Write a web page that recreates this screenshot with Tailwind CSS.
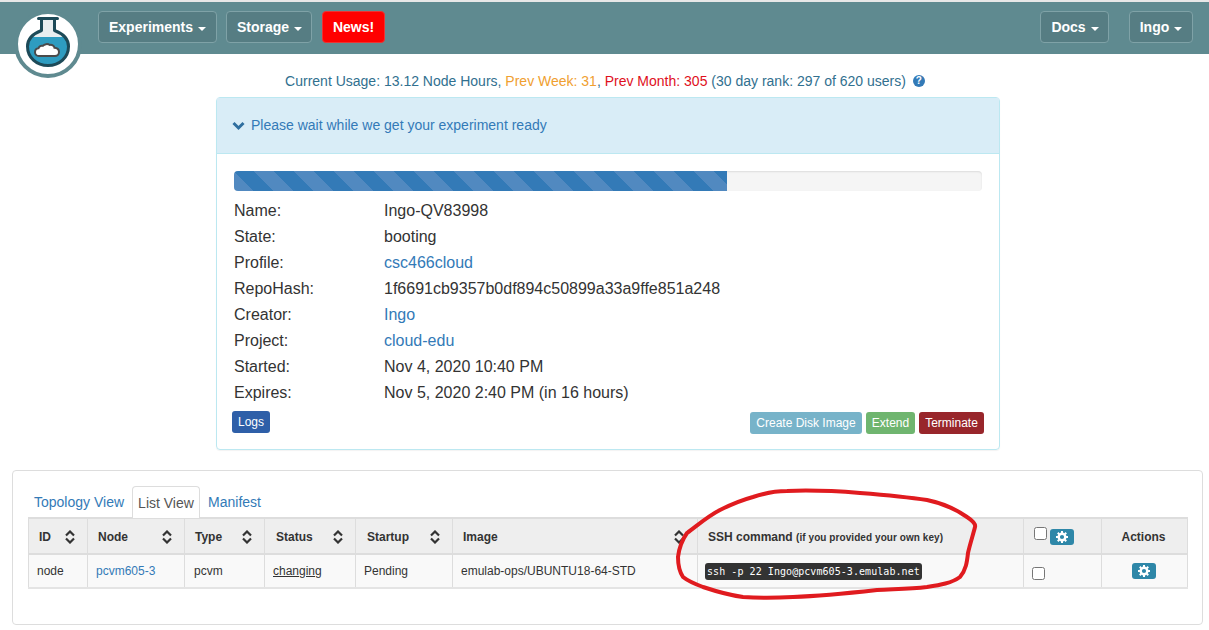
<!DOCTYPE html>
<html lang="en">
<head>
    <meta charset="UTF-8">
    <meta name="viewport" content="width=device-width, initial-scale=1.0">
    <title>Experiment Status</title>
    <script src="https://cdn.jsdelivr.net/npm/@tailwindcss/browser@4"></script>
</head>
<body class="relative h-[630px] overflow-hidden bg-white font-['Liberation_Sans',Arial,sans-serif] text-[14px] text-[#333]">
    <!-- top nav -->
    <nav class="flex h-[54px] items-start justify-between border-t-2 border-[#e7e7e7] bg-[#5f8a90] pl-[98px] pr-[16px] pt-[9px]">
        <div class="flex gap-[9px]">
            <a class="flex h-[32px] w-[119px] items-center justify-center gap-[5px] rounded border border-[#7fa2a7] bg-[#567d83] pt-[1px] font-bold text-white">Experiments <span class="mt-[2px] border-x-4 border-t-4 border-x-transparent border-t-white"></span></a>
            <a class="flex h-[32px] w-[86px] items-center justify-center gap-[5px] rounded border border-[#7fa2a7] bg-[#567d83] pl-[1px] pt-[1px] font-bold text-white">Storage <span class="mt-[2px] border-x-4 border-t-4 border-x-transparent border-t-white"></span></a>
            <a class="ml-[1px] flex h-[32px] w-[63px] items-center justify-center rounded border border-[#ee3333] bg-[#ff0000] pt-[1px] font-bold text-white">News!</a>
        </div>
        <div class="flex gap-[20px]">
            <a class="flex h-[32px] w-[69px] items-center justify-center gap-[5px] rounded border border-[#7fa2a7] bg-[#567d83] pl-[1px] pt-[1px] font-bold text-white">Docs <span class="mt-[2px] border-x-4 border-t-4 border-x-transparent border-t-white"></span></a>
            <a class="flex h-[32px] w-[64px] items-center justify-center gap-[5px] rounded border border-[#7fa2a7] bg-[#567d83] pt-[1px] font-bold text-white">Ingo <span class="mt-[2px] border-x-4 border-t-4 border-x-transparent border-t-white"></span></a>
        </div>
    </nav>

    <!-- logo sits over the nav -->
    <div class="absolute left-[14px] top-[10px] flex h-[68px] w-[68px] items-center justify-center rounded-full border-4 border-[#5f8a90] bg-white">
        <svg class="mb-[4px]" width="44" height="50" viewBox="0 0 44 50">
            <path d="M13 1.500h18M15.500 1.500v12C6 17 1.500 23 1.500 29.500 1.500 40.500 10.500 48.500 22 48.500S42.500 40.500 42.500 29.500C42.500 23 38 17 28.500 13.500v-12z" fill="#e8eef0"/>
            <path d="M4.500 20h35c2 2.800 3 6 3 9.500 0 11-9 19-20.500 19S1.500 40.500 1.500 29.500c0-3.500 1-6.700 3-9.500z" fill="#2e9cc0"/>
            <path d="M12.500 1.500h19M15.500 1.500v12C6 17 1.500 23 1.500 29.500 1.500 40.500 10.500 48.500 22 48.500S42.500 40.500 42.500 29.500C42.500 23 38 17 28.500 13.500v-12" fill="none" stroke="#1d4a58" stroke-width="3" stroke-linejoin="round" stroke-linecap="round"/>
            <path d="M13 39c-2.500 0-4-1.800-4-3.800 0-2.200 1.500-3.700 3.500-3.900.5-2 2.500-3 4.300-2.500 1.500-1.800 5-2.300 7-.8 2-.5 4.300.5 4.700 2.800 2.500.2 4.500 1.800 4.500 4.200S31 39 29 39z" fill="#fff" stroke="#4a4a4a" stroke-width="2"/>
        </svg>
    </div>

    <!-- usage line -->
    <p class="mt-[19px] flex h-[16px] items-center justify-center gap-[7px] pl-[1px] leading-[16px] text-[#31708f]">
        <span>Current Usage: 13.12 Node Hours, <span class="text-[#f0a030]">Prev Week: 31</span>, <span class="text-[#e0101c]">Prev Month: 305</span> (30 day rank: 297 of 620 users)</span>
        <span class="flex h-[12px] w-[12px] items-center justify-center rounded-full bg-[#337ab7] text-[10px] font-bold leading-none text-white">?</span>
    </p>

    <!-- experiment status panel -->
    <section class="ml-[216px] mt-[8px] h-[353px] w-[784px] rounded border border-[#bce8f1] shadow-[0_1px_1px_rgba(0,0,0,0.05)]">
        <div class="flex h-[56px] items-center gap-[6px] border-b border-[#bce8f1] bg-[#d9edf7] pl-[15px] text-[#337ab7]">
            <svg width="13" height="10" viewBox="0 0 13 10"><path d="M1.500 2 6.500 7 11.500 2" fill="none" stroke="#2f6f9f" stroke-width="3"/></svg>
            <span class="text-[14px]">Please wait while we get your experiment ready</span>
        </div>
        <div class="px-[17px] pt-[17px]">
            <div class="h-[20px] overflow-hidden rounded bg-[#f5f5f5] shadow-[inset_0_1px_2px_rgba(0,0,0,0.1)]">
                <div class="h-full w-[493px] bg-[repeating-linear-gradient(45deg,#5189c0_0,#5189c0_14.14px,#337ab7_14.14px,#337ab7_28.28px)]"></div>
            </div>
            <dl class="mt-[7px] grid grid-cols-[150px_1fr] text-[16px] leading-[26px]">
                <dt>Name:</dt><dd>Ingo-QV83998</dd>
                <dt>State:</dt><dd>booting</dd>
                <dt>Profile:</dt><dd class="text-[#337ab7]">csc466cloud</dd>
                <dt>RepoHash:</dt><dd>1f6691cb9357b0df894c50899a33a9ffe851a248</dd>
                <dt>Creator:</dt><dd class="text-[#337ab7]">Ingo</dd>
                <dt>Project:</dt><dd class="text-[#337ab7]">cloud-edu</dd>
                <dt>Started:</dt><dd>Nov 4, 2020 10:40 PM</dd>
                <dt>Expires:</dt><dd>Nov 5, 2020 2:40 PM (in 16 hours)</dd>
            </dl>
            <div class="mt-[5px] flex items-start justify-between text-[12px] text-white">
                <a class="-ml-[2px] flex h-[22px] w-[38px] items-center justify-center rounded-[3px] bg-[#2e5fa8]">Logs</a>
                <div class="mr-[-2px] mt-[1px] flex gap-[4px]">
                    <a class="flex h-[22px] w-[112px] items-center justify-center rounded-[3px] bg-[#77b3c9]">Create Disk Image</a>
                    <a class="flex h-[22px] w-[49px] items-center justify-center rounded-[3px] bg-[#6fb56f]">Extend</a>
                    <a class="flex h-[22px] w-[65px] items-center justify-center rounded-[3px] bg-[#98262b]">Terminate</a>
                </div>
            </div>
        </div>
    </section>

    <!-- node list -->
    <section class="ml-[12px] mt-[20px] h-[155px] w-[1191px] rounded border border-[#ddd] px-[15px] pt-[15px]">
        <div class="flex h-[31px] items-end">
            <a class="flex h-[31px] w-[104px] items-center pl-[6px] pt-[2px] text-[#337ab7]">Topology View</a>
            <a class="mb-[-1px] flex h-[32px] w-[68px] items-center justify-center rounded-t border border-b-0 border-[#ddd] bg-white pt-[2px] text-[#555]">List View</a>
            <a class="flex h-[31px] w-[69px] items-center justify-center pt-[2px] text-[#337ab7]">Manifest</a>
        </div>
        <table class="w-[1159px] table-fixed border-collapse text-[12px]">
            <colgroup>
                <col class="w-[59px]"><col class="w-[97px]"><col class="w-[80px]"><col class="w-[91px]"><col class="w-[97px]"><col class="w-[245px]"><col class="w-[326px]"><col class="w-[78px]"><col class="w-[86px]">
            </colgroup>
            <thead>
                <tr class="h-[36px] border-y-2 border-[#ddd] bg-[#eee] font-bold">
                    <th class="border-x border-[#ddd] pl-[10px] pt-[1px] text-left"><div class="flex items-center justify-between pr-[12px]">ID <svg width="10" height="14" viewBox="0 0 10 14"><path d="M1 5.500 5 1.500 9 5.500M1 8.500 5 12.500 9 8.500" fill="none" stroke="#333" stroke-width="2.200"/></svg></div></th>
                    <th class="border-x border-[#ddd] pl-[10px] pt-[1px] text-left"><div class="flex items-center justify-between pr-[12px]">Node <svg width="10" height="14" viewBox="0 0 10 14"><path d="M1 5.500 5 1.500 9 5.500M1 8.500 5 12.500 9 8.500" fill="none" stroke="#333" stroke-width="2.200"/></svg></div></th>
                    <th class="border-x border-[#ddd] pl-[10px] pt-[1px] text-left"><div class="flex items-center justify-between pr-[12px]">Type <svg width="10" height="14" viewBox="0 0 10 14"><path d="M1 5.500 5 1.500 9 5.500M1 8.500 5 12.500 9 8.500" fill="none" stroke="#333" stroke-width="2.200"/></svg></div></th>
                    <th class="border-x border-[#ddd] pl-[11px] pt-[1px] text-left"><div class="flex items-center justify-between pr-[12px]">Status <svg width="10" height="14" viewBox="0 0 10 14"><path d="M1 5.500 5 1.500 9 5.500M1 8.500 5 12.500 9 8.500" fill="none" stroke="#333" stroke-width="2.200"/></svg></div></th>
                    <th class="border-x border-[#ddd] pl-[11px] pt-[1px] text-left"><div class="flex items-center justify-between pr-[12px]">Startup <svg width="10" height="14" viewBox="0 0 10 14"><path d="M1 5.500 5 1.500 9 5.500M1 8.500 5 12.500 9 8.500" fill="none" stroke="#333" stroke-width="2.200"/></svg></div></th>
                    <th class="border-x border-[#ddd] pl-[10px] pt-[1px] text-left"><div class="flex items-center justify-between pr-[13px]">Image <svg width="10" height="14" viewBox="0 0 10 14"><path d="M1 5.500 5 1.500 9 5.500M1 8.500 5 12.500 9 8.500" fill="none" stroke="#333" stroke-width="2.200"/></svg></div></th>
                    <th class="border-x border-[#ddd] pl-[10px] pt-[1px] text-left">SSH command <small class="text-[10px] tracking-[0.07px]">(if you provided your own key)</small></th>
                    <th class="border-x border-[#ddd] pl-[10px] text-left"><div class="flex items-start gap-[3px]"><input type="checkbox" class="h-[13px] w-[13px]"><a class="mt-[2px] flex h-[16px] w-[24px] items-center justify-center rounded-[3px] bg-[#2e87a8]"><svg width="12" height="12" viewBox="-6 -6 12 12"><circle r="3.300" fill="none" stroke="#fff" stroke-width="2.400"/><path d="M-1 -6h2v2h-2zM-1 4h2v2h-2zM-6 -1h2v2h-2zM4 -1h2v2h-2z" fill="#fff"/><path d="M-1 -6h2v2h-2zM-1 4h2v2h-2zM-6 -1h2v2h-2zM4 -1h2v2h-2z" fill="#fff" transform="rotate(45)"/></svg></a></div></th>
                    <th class="border-x border-[#ddd] pr-[2px] pt-[1px] text-center">Actions</th>
                </tr>
            </thead>
            <tbody>
                <tr class="h-[34px] border-b-2 border-[#e4e4e4] bg-[#f9f9f9]">
                    <td class="border-x border-[#ddd] pb-[1px] pl-[8px]">node</td>
                    <td class="border-x border-[#ddd] pb-[1px] pl-[8px] text-[#337ab7]">pcvm605-3</td>
                    <td class="border-x border-[#ddd] pb-[1px] pl-[9px]">pcvm</td>
                    <td class="border-x border-[#ddd] pb-[1px] pl-[8px]"><span class="underline">changing</span></td>
                    <td class="border-x border-[#ddd] pb-[1px] pl-[8px]">Pending</td>
                    <td class="border-x border-[#ddd] pb-[1px] pl-[8px]">emulab-ops/UBUNTU18-64-STD</td>
                    <td class="border-x border-[#ddd] pb-[1px] pl-[7px]"><code class="rounded-[3px] bg-[#333] px-[2px] py-[3px] font-['DejaVu_Sans_Mono',monospace] text-[10px] tracking-[0.06px] text-white">ssh -p 22 Ingo@pcvm605-3.emulab.net</code></td>
                    <td class="border-x border-[#ddd] pl-[8px]"><input type="checkbox" class="mt-[4px] block h-[13px] w-[13px]"></td>
                    <td class="border-x border-[#ddd] pb-[1px] pr-[2px]"><a class="mx-auto flex h-[16px] w-[24px] items-center justify-center rounded-[3px] bg-[#2e87a8]"><svg width="12" height="12" viewBox="-6 -6 12 12"><circle r="3.300" fill="none" stroke="#fff" stroke-width="2.400"/><path d="M-1 -6h2v2h-2zM-1 4h2v2h-2zM-6 -1h2v2h-2zM4 -1h2v2h-2z" fill="#fff"/><path d="M-1 -6h2v2h-2zM-1 4h2v2h-2zM-6 -1h2v2h-2zM4 -1h2v2h-2z" fill="#fff" transform="rotate(45)"/></svg></a></td>
                </tr>
            </tbody>
        </table>
    </section>

    <!-- hand drawn annotation on top of the screenshot -->
    <svg class="pointer-events-none absolute left-0 top-0" width="1209" height="630" viewBox="0 0 1209 630">
        <path d="M687 533C698 525 708 516 720 510C730 505 742 500 753 497C765 493 776 491 787 491C810 490 835 491 860 493C885 495 907 497 927 500C942 503 957 510 967 517C973 521 976 524 975 527C973 535 970 544 968 553C967 562 966 570 960 577C952 583 940 585 927 587C910 589 895 589 877 590C850 593 820 596 793 597C775 598 758 598 743 597C728 595 715 591 703 587C695 584 688 581 683 577C679 571 678 564 678 557C679 549 682 540 687 533Z" fill="none" stroke="#e01b1f" stroke-width="4" stroke-linecap="round"/>
    </svg>
</body>
</html>
